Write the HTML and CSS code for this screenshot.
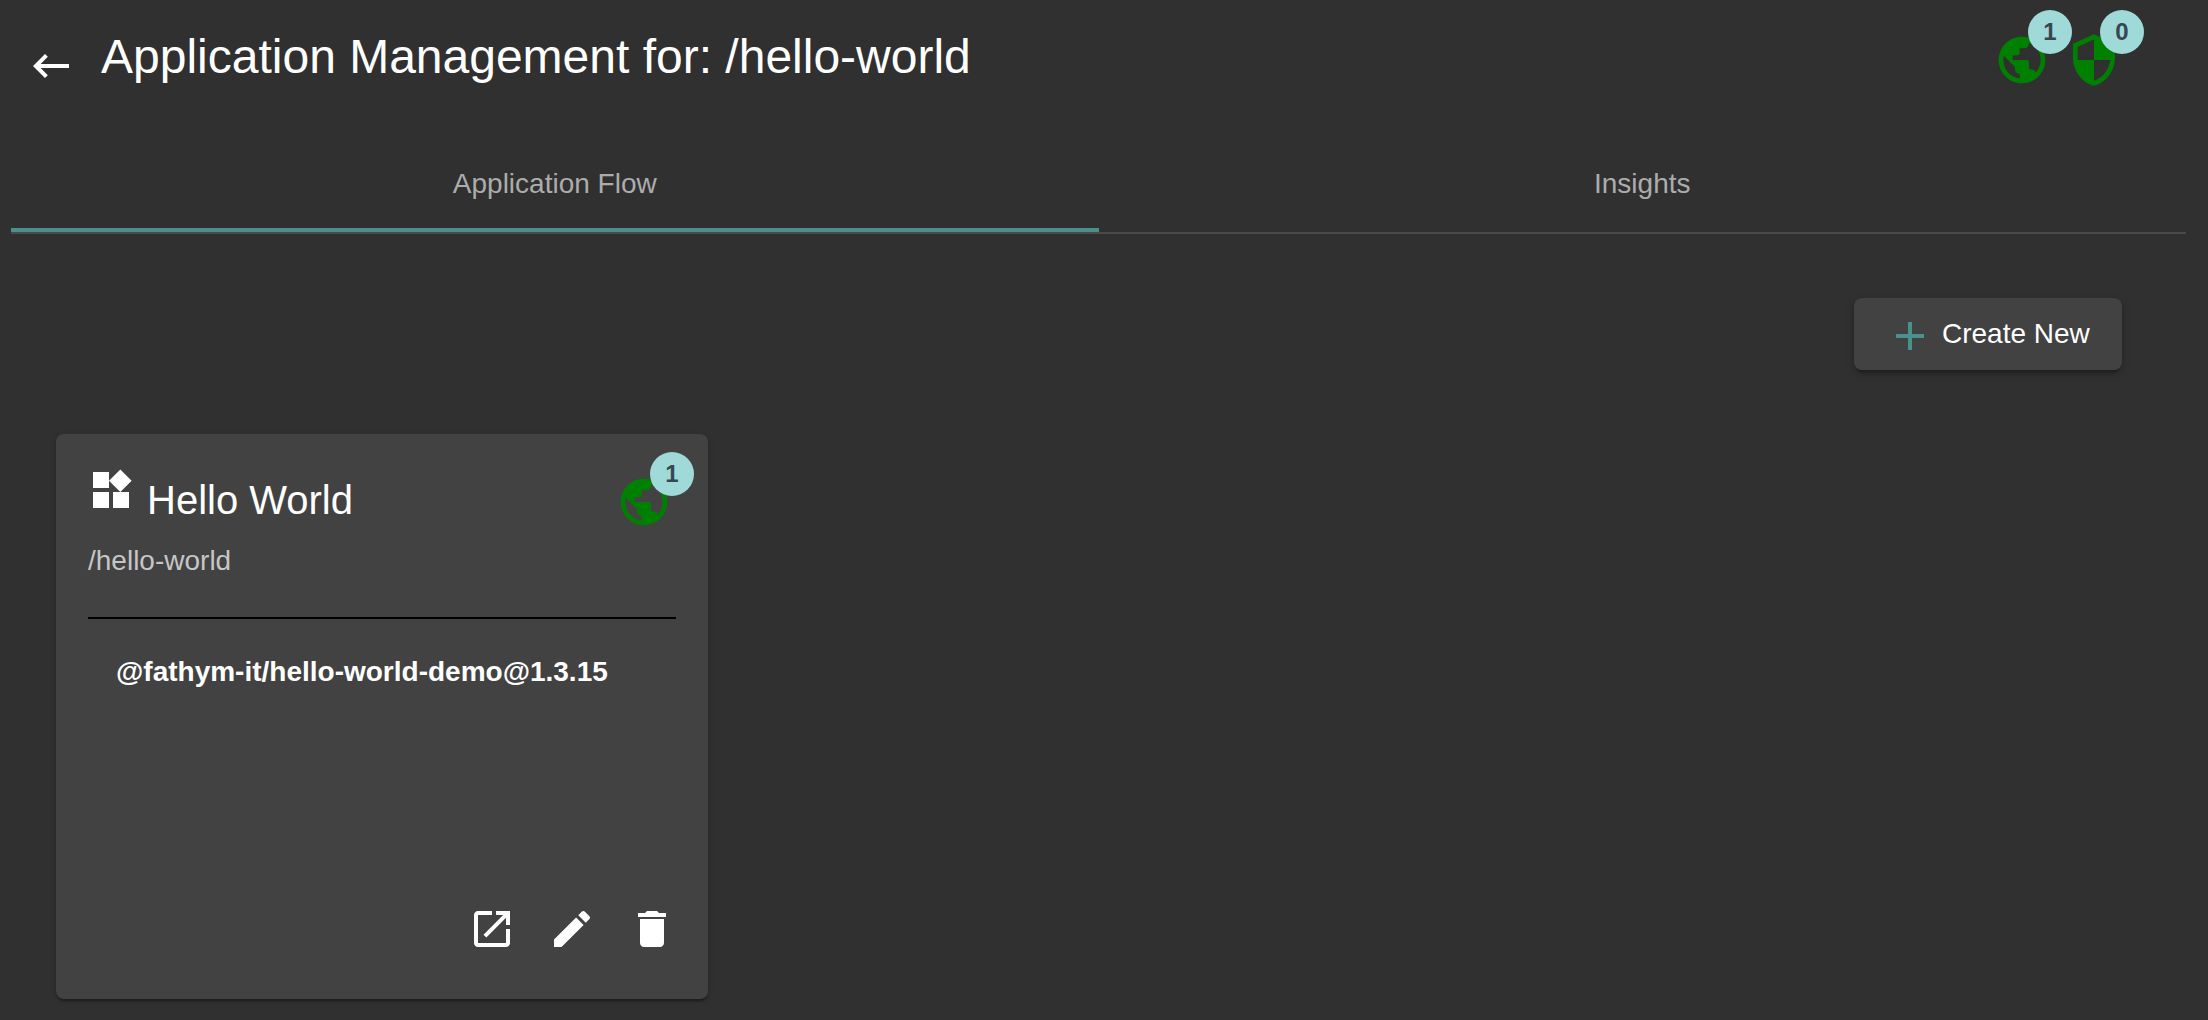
FILE: index.html
```html
<!DOCTYPE html>
<html lang="en">
<head>
<meta charset="utf-8">
<title>Application Management</title>
<link rel="stylesheet" href="styles.css">
</head>
<body>
<svg class="sprite" aria-hidden="true">
  <symbol id="public" viewBox="0 0 24 24"><path d="M12 2C6.48 2 2 6.48 2 12s4.48 10 10 10 10-4.48 10-10S17.52 2 12 2zm-1 17.93c-3.95-.49-7-3.85-7-7.93 0-.62.08-1.21.21-1.79L9 15v1c0 1.1.9 2 2 2v1.93zm6.9-2.54c-.26-.81-1-1.39-1.9-1.39h-1v-3c0-.55-.45-1-1-1H8v-2h2c.55 0 1-.45 1-1V7h2c1.100 0 2-.9 2-2v-.41c2.930 1.190 5 4.060 5 7.410 0 2.080-.8 3.970-2.100 5.390z"/></symbol>
</svg>
<header class="header">
  <svg class="icon back" viewBox="0 0 24 24"><path d="M21 11H6.83l3.58-3.59L9 6l-6 6 6 6 1.410-1.410L6.830 13H21z"/></svg>
  <h1 class="title">Application Management for: /hello-world</h1>
  <div class="statuses">
    <div class="status"><svg class="status-icon"><use href="#public"/></svg><span class="badge">1</span></div>
    <div class="status"><svg class="status-icon" viewBox="0 0 24 24"><path d="M12 1L3 5v6c0 5.550 3.840 10.740 9 12 5.160-1.260 9-6.450 9-12V5l-9-4zm0 10.990h7c-.53 4.120-3.280 7.790-7 8.940V12H5V6.300l7-3.110v8.800z"/></svg><span class="badge">0</span></div>
  </div>
</header>
<nav class="tabs">
  <a class="tab active">Application Flow</a>
  <a class="tab">Insights</a>
</nav>
<main class="content">
  <button class="create"><svg class="icon plus" viewBox="0 0 24 24"><path d="M19 13h-6v6h-2v-6H5v-2h6V5h2v6h6v2z"/></svg>Create New</button>
  <article class="card">
    <div class="card-head">
      <svg class="icon widgets" viewBox="0 0 24 24"><path d="M13 13v8h8v-8h-8zM3 21h8v-8H3v8zM3 3v8h8V3H3zm13.660-1.310L11 7.340 16.660 13l5.660-5.660-5.660-5.650z"/></svg>
      <h2 class="card-title">Hello World</h2>
      <div class="status card-status"><svg class="status-icon"><use href="#public"/></svg><span class="badge">1</span></div>
    </div>
    <p class="path">/hello-world</p>
    <p class="package">@fathym-it/hello-world-demo@1.3.15</p>
    <div class="actions">
      <svg class="icon" viewBox="0 0 24 24"><path d="M19 19H5V5h7V3H5c-1.110 0-2 .9-2 2v14c0 1.100.89 2 2 2h14c1.100 0 2-.9 2-2v-7h-2v7zM14 3v2h3.590l-9.830 9.830 1.410 1.410L19 6.410V10h2V3h-7z"/></svg>
      <svg class="icon" viewBox="0 0 24 24"><path d="M3 17.250V21h3.750L17.810 9.940l-3.750-3.750L3 17.250zM20.710 7.040c.39-.39.39-1.020 0-1.410l-2.340-2.340c-.39-.39-1.020-.39-1.410 0l-1.830 1.830 3.750 3.750 1.830-1.830z"/></svg>
      <svg class="icon" viewBox="0 0 24 24"><path d="M6 19c0 1.100.9 2 2 2h8c1.100 0 2-.9 2-2V7H6v12zM19 4h-3.500l-1-1h-5l-1 1H5v2h14V4z"/></svg>
    </div>
  </article>
</main>
</body>
</html>
```
FILE: styles.css
```css
* { box-sizing: border-box; }

body {
  margin: 0;
  height: 1020px;
  overflow: hidden;
  background: #303030;
  color: #fff;
  font-family: "Liberation Sans", Arial, sans-serif;
  font-size: 28px;
}

h1, h2, p { margin: 0; font-weight: 400; }

.sprite { display: none; }

.icon {
  flex: none;
  width: 48px;
  height: 48px;
  fill: currentColor;
}

.header {
  display: flex;
  align-items: flex-start;
  height: 138px;
  padding: 0 86px 0 27px;
}

.back { margin-top: 42px; }

.title {
  margin: 29px 0 0 26px;
  font-size: 48px;
  line-height: 56px;
}

.statuses {
  display: flex;
  gap: 16px;
  margin: 32px 0 0 auto;
}

.status {
  position: relative;
  width: 56px;
  height: 56px;
}

.status-icon {
  display: block;
  width: 56px;
  height: 56px;
  fill: #008000;
}

.badge {
  position: absolute;
  top: -22px;
  right: -22px;
  width: 44px;
  height: 44px;
  border-radius: 50%;
  background: #9fdad9;
  color: #37474f;
  font-size: 24px;
  font-weight: 700;
  line-height: 44px;
  text-align: center;
}

.tabs {
  display: flex;
  height: 96px;
  margin: 0 22px 0 11px;
  border-bottom: 2px solid #4a4a4a;
}

.tab {
  flex: 1;
  padding-top: 1px;
  line-height: 90px;
  text-align: center;
  color: #acacac;
  border-bottom: 4px solid transparent;
}

.tab.active { border-bottom-color: #4a918e; }

.content {
  display: flex;
  flex-direction: column;
  padding: 64px 86px 0 56px;
}

.create {
  display: flex;
  align-items: center;
  align-self: flex-end;
  width: 268px;
  height: 72px;
  padding: 0 32px;
  border: 0;
  border-radius: 8px;
  background: #424242;
  color: #fff;
  font: inherit;
  white-space: nowrap;
  box-shadow: 0 6px 2px -4px rgba(0, 0, 0, .2), 0 4px 4px rgba(0, 0, 0, .14), 0 2px 10px rgba(0, 0, 0, .12);
}

.plus {
  margin: 3px 8px 0 0;
  fill: #4a918e;
}

.card {
  display: flex;
  flex-direction: column;
  width: 652px;
  height: 565px;
  margin-top: 64px;
  padding: 32px;
  border-radius: 8px;
  background: #424242;
  box-shadow: 0 4px 2px -2px rgba(0, 0, 0, .2), 0 2px 2px rgba(0, 0, 0, .14), 0 2px 6px rgba(0, 0, 0, .12);
}

.card-head {
  display: flex;
  height: 72px;
}

.widgets { margin-left: -1px; }

.card-title {
  margin: 11px 0 0 12px;
  font-size: 40px;
  line-height: 46px;
}

.card-status { margin: 8px 4px 0 auto; }

.path {
  height: 81px;
  padding-top: 7px;
  line-height: 32px;
  color: #c6c6c6;
  border-bottom: 2px solid #000;
}

.package {
  padding: 37px 0 0 28px;
  line-height: 32px;
  font-weight: 700;
}

.actions {
  display: flex;
  justify-content: flex-end;
  gap: 32px;
  margin: auto 0 14px;
}
```
